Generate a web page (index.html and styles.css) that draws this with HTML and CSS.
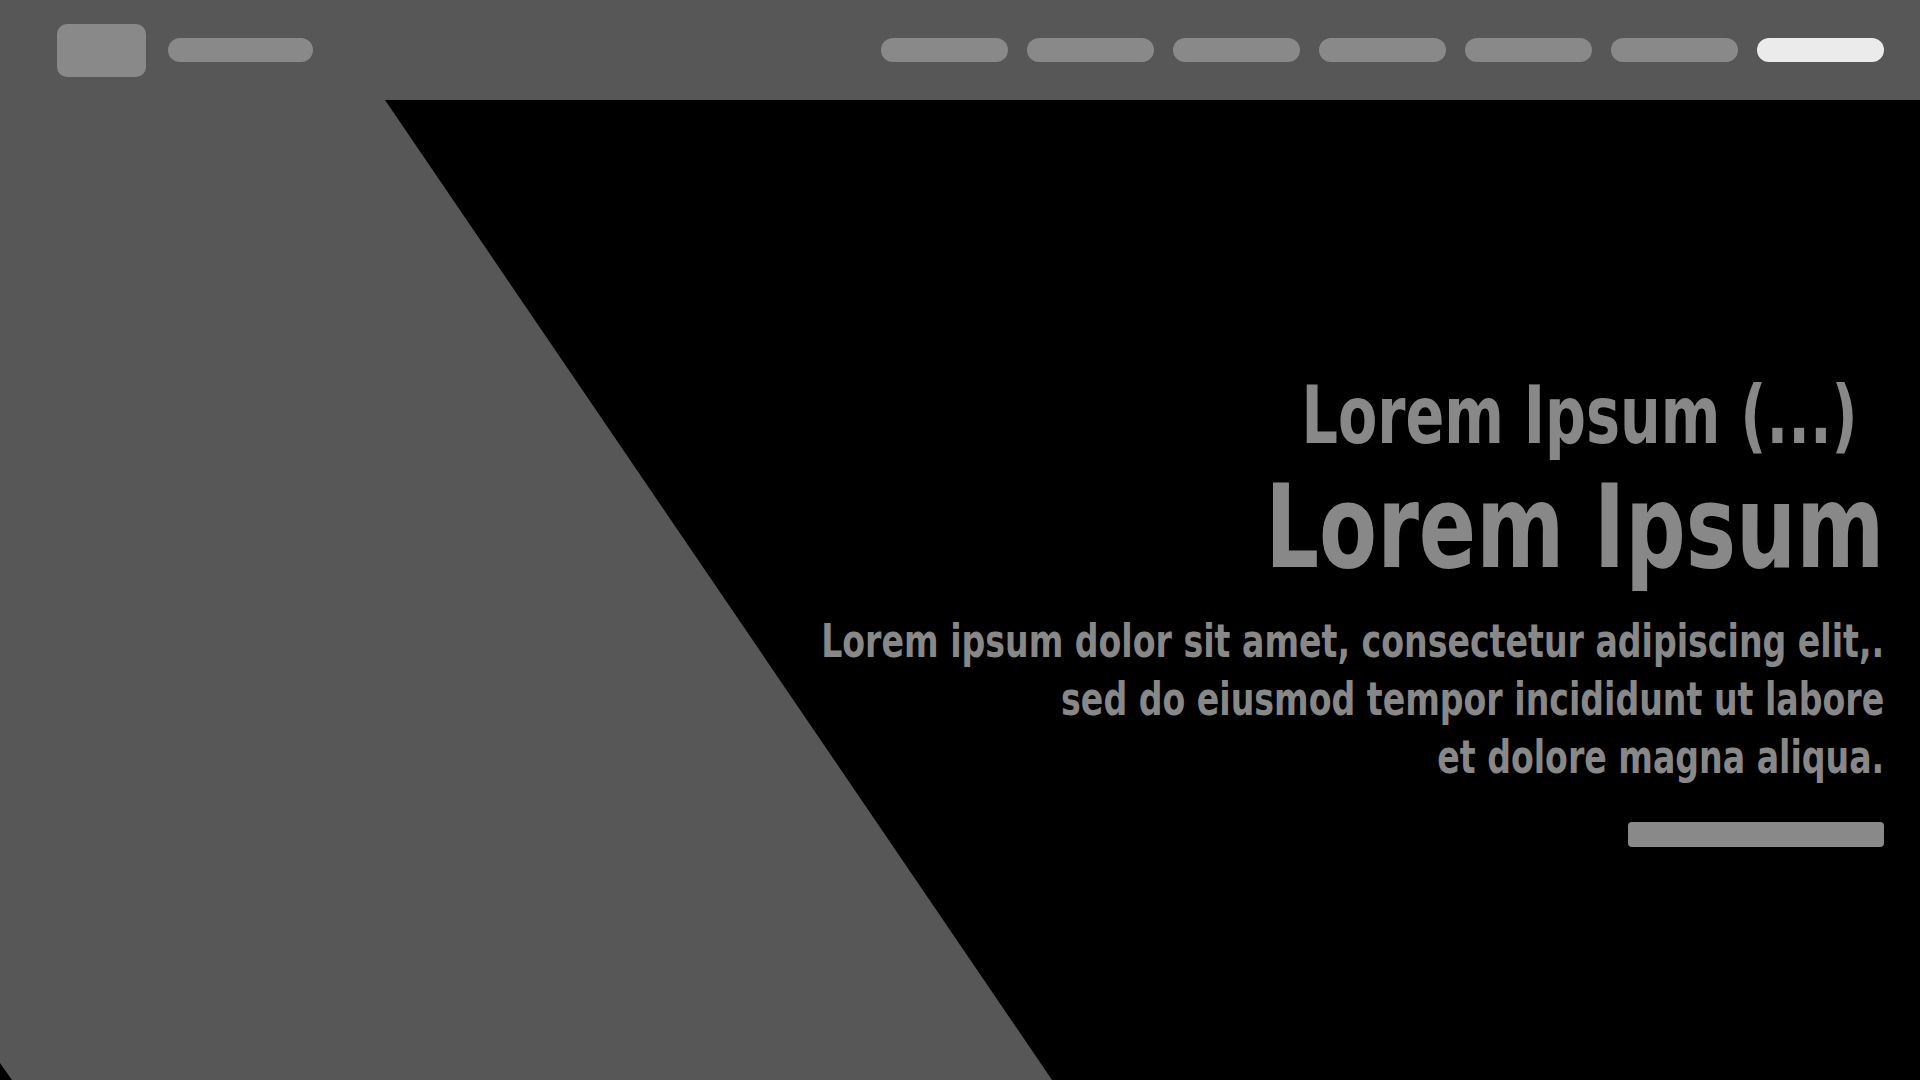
FILE: index.html
```html
<!DOCTYPE html>
<html lang="en">
<head>
<meta charset="utf-8">
<title>Lorem Ipsum</title>
<link rel="stylesheet" href="styles.css">
</head>
<body>
<header class="topbar">
  <div class="brand">
    <div class="logo"></div>
    <div class="site-name"></div>
  </div>
  <nav class="nav">
    <span class="nav-item"></span>
    <span class="nav-item"></span>
    <span class="nav-item"></span>
    <span class="nav-item"></span>
    <span class="nav-item"></span>
    <span class="nav-item"></span>
    <span class="nav-item nav-item-active"></span>
  </nav>
</header>
<main class="hero">
  <div class="hero-content">
    <h2 class="kicker">Lorem Ipsum (...)</h2>
    <h1 class="title">Lorem Ipsum</h1>
    <p class="lead">Lorem ipsum dolor sit amet, consectetur adipiscing elit,.<br>sed do eiusmod tempor incididunt ut labore<br>et dolore magna aliqua.</p>
    <div class="cta"></div>
  </div>
</main>
</body>
</html>
```

FILE: styles.css
```css
html, body {
  margin: 0;
  padding: 0;
}
body {
  width: 1920px;
  height: 1080px;
  overflow: hidden;
  background: #000;
  font-family: "Liberation Sans Narrow", "DejaVu Sans Condensed", "Liberation Sans", sans-serif;
}
.topbar {
  height: 100px;
  background: #575757;
  display: flex;
  align-items: center;
  justify-content: space-between;
  padding: 0 36px 0 57px;
  box-sizing: border-box;
}
.brand {
  display: flex;
  align-items: center;
  gap: 22px;
}
.logo {
  width: 89px;
  height: 53px;
  border-radius: 10px;
  background: #898989;
}
.site-name {
  width: 145px;
  height: 24px;
  border-radius: 12px;
  background: #898989;
}
.nav {
  display: flex;
  gap: 19px;
}
.nav-item {
  display: block;
  width: 127px;
  height: 24px;
  border-radius: 12px;
  background: #898989;
}
.nav-item-active {
  background: #ebebeb;
}
.hero {
  position: relative;
  height: 980px;
  background: #000;
}
.hero::before {
  content: "";
  position: absolute;
  inset: 0;
  background: #575757;
  clip-path: polygon(0 0, 385px 0, 1052px 980px, 12px 980px, 0 963px);
}
.hero-content {
  position: relative;
  display: flex;
  flex-direction: column;
  align-items: flex-end;
  text-align: right;
  padding: 270px 36px 0 0;
  color: #888888;
  font-weight: bold;
}
.kicker {
  margin: 0;
  font-size: 81px;
  line-height: 90px;
  font-weight: bold;
  padding-right: 33px;
  transform: scaleX(0.785);
  transform-origin: right center;
}
.title {
  margin: 7px 0 0;
  font-size: 116px;
  line-height: 120px;
  font-weight: bold;
  transform: scaleX(0.81);
  transform-origin: right center;
}
.lead {
  margin: 25px 0 0;
  font-size: 47px;
  line-height: 58px;
  transform: scaleX(0.785);
  transform-origin: right center;
}
.cta {
  margin-top: 36px;
  width: 256px;
  height: 25px;
  border-radius: 4px;
  background: #898989;
}
```
